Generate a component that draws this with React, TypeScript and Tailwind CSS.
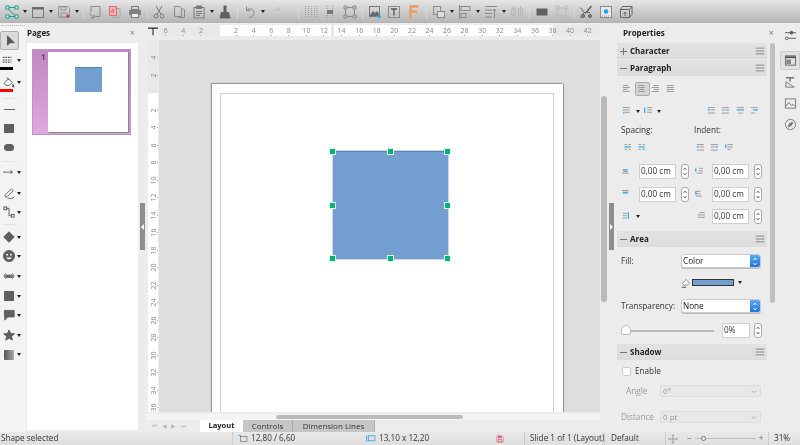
import type { ReactNode } from "react";

const Ic = ({ children, size = 14, color = "#7a7a7a" }: { children: ReactNode; size?: number; color?: string }) => (
  <svg viewBox="0 0 14 14" width={size} height={size} fill="none" stroke={color} strokeWidth="1">
    {children}
  </svg>
);

const Arrow = () => <div className="h-0 w-0 border-x-[2px] border-t-[3px] border-x-transparent border-t-[#222]" />;

const TbArrow = () => (
  <div className="flex w-[6.5px] justify-center">
    <Arrow />
  </div>
);
const TbSep = () => (
  <div className="flex w-[5px] justify-center">
    <div className="h-[14px] w-px bg-[#d6d6d6]" />
  </div>
);
const Tb = ({ children }: { children: ReactNode }) => <div className="flex w-[19.7px] justify-center">{children}</div>;

const Toolbar = () => (
  <div className="flex h-[23px] items-center bg-gradient-to-b from-[#e6e6e6] to-[#b4b4b4] pl-[2px]">
    <Tb>
      <Ic color="#1f9c8c">
        <path d="M3 2.5h8M2.5 3.5l8 7M3 11.5h8" />
        <rect x="1" y="1" width="3" height="3" fill="#cfe" />
        <rect x="10" y="1" width="3" height="3" fill="#cfe" />
        <rect x="1" y="10" width="3" height="3" fill="#cfe" />
        <rect x="10" y="10" width="3" height="3" fill="#cfe" />
      </Ic>
    </Tb>
    <TbArrow />
    <Tb>
      <Ic>
        <rect x="1.5" y="2.5" width="11" height="10" />
        <path d="M1.5 3.5h11" strokeWidth="2" stroke="#666" />
      </Ic>
    </Tb>
    <TbArrow />
    <Tb>
      <Ic color="#969696">
        <path d="M1.5 1.5h9l2 2v9h-11z" />
        <rect x="4" y="2" width="5" height="3" />
        <rect x="4" y="8" width="6" height="4" />
        <circle cx="11" cy="11" r="1.6" fill="#e0334d" stroke="none" />
      </Ic>
    </Tb>
    <TbArrow />
    <TbSep />
    <Tb>
      <Ic color="#8a8a8a">
        <path d="M3 7V1.5h9v10H7" />
        <path d="M1.5 8.5L6 13M6 9.5V13H2.5" />
      </Ic>
    </Tb>
    <Tb>
      <Ic color="#e4656b">
        <path d="M1.5 1.5h7v9h-7z" fill="#f2b5b8" />
        <path d="M9 3.5h3v9H5v-2" stroke="#a5a5a5" />
        <path d="M3 7l2-3 1 3z" />
      </Ic>
    </Tb>
    <Tb>
      <Ic>
        <rect x="3.5" y="1.5" width="7" height="3" />
        <rect x="1" y="5" width="12" height="5" fill="#808080" stroke="none" />
        <rect x="3.5" y="8.5" width="7" height="4" fill="#eee" />
      </Ic>
    </Tb>
    <TbSep />
    <Tb>
      <Ic>
        <path d="M4 1l5 8M10 1L5 9" />
        <circle cx="4" cy="11" r="2" />
        <circle cx="10" cy="11" r="2" />
      </Ic>
    </Tb>
    <Tb>
      <Ic color="#8a8a8a">
        <path d="M2.5 1.5h5l2 2v8h-7z" />
        <path d="M9.5 4h2l1 1v7.5h-6V11.5" />
      </Ic>
    </Tb>
    <Tb>
      <Ic>
        <rect x="2" y="2.5" width="10" height="10.5" />
        <rect x="4.5" y="1" width="5" height="2.5" fill="#777" />
        <path d="M4 6.5h6M4 8.5h6M4 10.5h4" />
      </Ic>
    </Tb>
    <TbArrow />
    <Tb>
      <Ic color="#606060">
        <rect x="6" y="1" width="2" height="6" fill="#606060" />
        <path d="M3 7.5h8v2H3zM3 9.5l-1 3.5h10l-1-3.5" fill="#606060" />
      </Ic>
    </Tb>
    <TbSep />
    <Tb>
      <Ic color="#8a8a8a">
        <path d="M3.5 1.5v4h4" />
        <path d="M3.5 5.5C6 2.5 11 3.5 11 8c0 3-2.5 4.5-5 4.5" />
      </Ic>
    </Tb>
    <TbArrow />
    <Tb>
      <Ic color="#c4c4c4">
        <path d="M10.5 1.5v4h-4" />
        <path d="M10.5 5.5C8 2.5 3 3.5 3 8c0 3 2.5 4.5 5 4.5" />
      </Ic>
    </Tb>
    <div className="w-[10px]" />
    <TbSep />
    <Tb>
      <Ic color="#a3a3a3">
        <path d="M1.5 1v12M4.5 1v12M7.5 1v12M10.5 1v12M13 1v12" strokeDasharray="1 1" />
      </Ic>
    </Tb>
    <Tb>
      <Ic color="#959595">
        <path d="M4 1v3M10 1v3M4 10v3M10 10v3" strokeDasharray="1 1" />
        <rect x="4" y="5" width="6" height="4" fill="#777" stroke="none" />
      </Ic>
    </Tb>
    <Tb>
      <Ic color="#8a8a8a">
        <rect x="2.5" y="2.5" width="9" height="9" />
        <path d="M1 1h3v3H1zM10 1h3v3h-3zM1 10h3v3H1zM10 10h3v3h-3z" fill="#c4c4c4" />
      </Ic>
    </Tb>
    <TbSep />
    <Tb>
      <Ic>
        <rect x="1.5" y="1.5" width="10" height="10" />
        <path d="M2 10l3-4 2 2 2-2 2 3v2H2z" fill="#666" stroke="none" />
        <path d="M11 9.5v4M9 11.5h4" stroke="#2ba9e8" strokeWidth="1.3" />
      </Ic>
    </Tb>
    <Tb>
      <Ic color="#8a8a8a">
        <rect x="1.5" y="1.5" width="11" height="11" />
        <path d="M4 4h6M7 4v6.5" stroke="#555" strokeWidth="1.3" />
      </Ic>
    </Tb>
    <Tb>
      <Ic color="#ef9a63">
        <path d="M3.5 13V1.5h8M3.5 6.5h6.5" strokeWidth="2.4" />
      </Ic>
    </Tb>
    <TbSep />
    <Tb>
      <Ic color="#8a8a8a">
        <rect x="1.5" y="1.5" width="7" height="8" />
        <rect x="5.5" y="6.5" width="7" height="6" fill="#ddd" />
      </Ic>
    </Tb>
    <TbArrow />
    <Tb>
      <Ic color="#8a8a8a">
        <path d="M1.5 0v14" />
        <rect x="3" y="1.5" width="9" height="4" />
        <rect x="3" y="8.5" width="5" height="4" />
      </Ic>
    </Tb>
    <TbArrow />
    <Tb>
      <Ic color="#8a8a8a">
        <path d="M1 1.5h12M1 5h7M1 8.5h7M1 12h7" />
        <path d="M10.5 13V4M9 6l1.5-2L12 6" />
      </Ic>
    </Tb>
    <TbArrow />
    <Tb>
      <Ic color="#b8b8b8">
        <path d="M3.5 1v12M10.5 1v12" />
        <rect x="1.5" y="4" width="4" height="6" />
        <rect x="8.5" y="4" width="4" height="6" />
      </Ic>
    </Tb>
    <TbSep />
    <Tb>
      <Ic>
        <rect x="1.5" y="3.5" width="11" height="7" fill="#606060" stroke="none" />
      </Ic>
    </Tb>
    <Tb>
      <Ic color="#bdbdbd">
        <rect x="3" y="3" width="8" height="8" />
        <path d="M1 1h3v3H1zM10 1h3v3h-3zM1 10h3v3H1zM10 10h3v3h-3z" />
      </Ic>
    </Tb>
    <TbSep />
    <Tb>
      <Ic color="#666">
        <path d="M1.5 2.5L5 7.5 1.5 12.5M5 7.5h6M11 3L6 9" />
        <circle cx="4" cy="11" r="1.6" fill="#888" />
        <circle cx="11" cy="11" r="1.6" fill="#888" />
        <path d="M12.5 1l-5 6" strokeWidth="1.6" />
      </Ic>
    </Tb>
    <Tb>
      <Ic color="#8a8a8a">
        <rect x="1.5" y="1.5" width="11" height="11" fill="#e8e8e8" />
        <circle cx="7" cy="6.5" r="2.2" fill="#1c9ee8" stroke="none" />
        <path d="M3 11h8" strokeDasharray="1 1" />
      </Ic>
    </Tb>
    <Tb>
      <Ic color="#666">
        <path d="M1.5 4.5h9v8h-9zM1.5 4.5l2-3h9.5v8l-2.5 3M10.5 4.5L13 1.5" />
        <path d="M6 11V7M4.5 8.5L6 7l1.5 1.5" />
      </Ic>
    </Tb>
  </div>
);

const Tool = ({ children, arrow }: { children: ReactNode; arrow?: boolean }) => (
  <div className="flex h-[19.6px] items-center">
    <div className="flex w-[16px] justify-center pl-[2px]">{children}</div>
    {arrow && (
      <div className="ml-[1px]">
        <Arrow />
      </div>
    )}
  </div>
);

const LeftSep = () => <div className="my-[1px] ml-[2px] h-px w-[15px] bg-[#e2e2e2]" />;

const LeftBar = () => (
  <div className="flex w-[26px] flex-col bg-[#f3f3f3]">
    <div className="mx-[1px] mt-[2px] h-px border-t border-dotted border-[#b5b5b5]" />
    <div className="mt-[5px] flex h-[19px] w-[19px] items-center justify-center rounded-[2px] border border-[#b5adb5] bg-[#dcdcdc]">
      <Ic size={12} color="#555">
        <path d="M4 1v11l3-3h5z" fill="#555" />
      </Ic>
    </div>
    <div className="mt-[4px] flex h-[21px] flex-col">
      <div className="flex items-center">
        <div className="flex w-[16px] justify-center">
          <Ic size={12} color="#555">
            <path d="M1 4h10M1 7h10M1 9.5h10" strokeWidth="1.4" strokeDasharray="2 1" />
          </Ic>
        </div>
        <div className="ml-[1px]">
          <Arrow />
        </div>
      </div>
      <div className="mt-[1px] h-[3px] w-[13px] bg-black" />
    </div>
    <div className="mt-[1px] flex h-[21px] flex-col">
      <div className="flex items-center">
        <div className="flex w-[16px] justify-center">
          <Ic size={13} color="#555">
            <path d="M2 8l5-5 4 4-3 3H4z" fill="#fff" />
            <path d="M5 1.5l3 3" />
            <path d="M12 9c1 2 1 3 0 3s-1-1 0-3z" fill="#555" />
          </Ic>
        </div>
        <div className="ml-[1px]">
          <Arrow />
        </div>
      </div>
      <div className="h-[3px] w-[13px] bg-[#ff0000]" />
    </div>
    <LeftSep />
    <Tool>
      <div className="h-px w-[11px] bg-[#666]" />
    </Tool>
    <div className="-mt-[1px]">
      <Tool>
        <div className="h-[9px] w-[10px] bg-[#5f5f5f]" />
      </Tool>
    </div>
    <Tool>
      <div className="h-[7px] w-[10px] rounded-full bg-[#5f5f5f]" />
    </Tool>
    <div className="mt-[2px]">
      <LeftSep />
    </div>
    <Tool arrow>
      <Ic size={12} color="#555">
        <path d="M0 6h11M8.5 4L11 6 8.5 8" />
      </Ic>
    </Tool>
    <div className="mt-px">
      <Tool arrow>
        <Ic size={13} color="#666">
          <path d="M2 9l1 2 2-1 6-6-2-2-6 6z" />
          <path d="M5 12c2 1 5 0 7-1" />
        </Ic>
      </Tool>
    </div>
    <Tool arrow>
      <Ic size={13} color="#555">
        <rect x="1" y="1" width="3" height="3" />
        <rect x="9" y="9" width="3" height="3" />
        <path d="M4 2.5h2.5v8H9" />
      </Ic>
    </Tool>
    <div className="mb-[2px]">
      <LeftSep />
    </div>
    <Tool arrow>
      <div className="h-[8px] w-[8px] rotate-45 bg-[#5f5f5f]" />
    </Tool>
    <Tool arrow>
      <Ic size={13} color="#5f5f5f">
        <circle cx="6.5" cy="6.5" r="6" fill="#5f5f5f" />
        <circle cx="4.5" cy="5" r="1" fill="#fff" stroke="none" />
        <circle cx="8.5" cy="5" r="1" fill="#fff" stroke="none" />
        <path d="M3.5 8c1 2.5 5 2.5 6 0z" fill="#fff" stroke="none" />
      </Ic>
    </Tool>
    <Tool arrow>
      <Ic size={13} color="#666">
        <path d="M3 5.5h7v2.5H3z" fill="#666" />
        <path d="M3 3.5L1 6.5l2 3M10 3.5l2 3-2 3" />
      </Ic>
    </Tool>
    <Tool arrow>
      <div className="h-[10px] w-[10px] bg-[#5f5f5f]" />
    </Tool>
    <Tool arrow>
      <Ic size={13} color="#5f5f5f">
        <path d="M1.5 1.5h10.5v7H5L2 12V8.5H1.5z" fill="#5f5f5f" />
      </Ic>
    </Tool>
    <Tool arrow>
      <Ic size={13} color="#5f5f5f">
        <path d="M6.5 1l1.7 3.8 4.1.4-3.1 2.7.9 4.1-3.6-2.1L2.9 12l.9-4.1L.7 5.2l4.1-.4z" fill="#5f5f5f" />
      </Ic>
    </Tool>
    <Tool arrow>
      <div className="h-[10px] w-[10px] rounded-[1px] bg-gradient-to-r from-[#555] to-[#aaa]" />
    </Tool>
  </div>
);

const PagesPanel = () => (
  <div className="flex w-[112px] flex-col bg-[#ececec]">
    <div className="flex h-[20px] items-center justify-between pl-[1px] pr-[3px]">
      <span className="text-[8px] font-bold text-[#222]">Pages</span>
      <span className="text-[9px] text-[#888]">×</span>
    </div>
    <div className="ml-[1px] h-[387px] bg-white pl-[5px] pt-[6px]">
      <div className="relative h-[86px] w-[99px] border border-[#c78fc8] bg-gradient-to-b from-[#c188c2] to-[#dda9de] pl-[15px] pt-[2px]">
        <div className="absolute left-[8px] top-[1px] text-[8px] font-bold text-[#555]">1</div>
        <div className="h-[80px] w-[80px] bg-white pl-[27px] pt-[15px] shadow-[1px_1px_1px_#888]">
          <div className="h-[25px] w-[27px] border-t border-[#5a85b8] bg-[#729fcf]" />
        </div>
      </div>
    </div>
  </div>
);

const Splitter = ({ dir }: { dir: "l" | "r" }) => (
  <div className="flex w-[5px] flex-col pt-[180px]">
    <div className="flex h-[47px] items-center justify-center bg-[#8e8e8e]">
      <div
        className={
          dir === "l"
            ? "h-0 w-0 border-y-[3px] border-r-[3px] border-y-transparent border-r-white"
            : "h-0 w-0 border-y-[3px] border-l-[3px] border-y-transparent border-l-white"
        }
      />
    </div>
  </div>
);

const hLabels = ["6", "4", "2", "", "2", "4", "6", "8", "10", "12", "14", "16", "18", "20", "22", "24", "26", "28", "30", "32", "34", "36", "38", "40", "42"];
const vLabels = ["4", "2", "", "2", "4", "6", "8", "10", "12", "14", "16", "18", "20", "22", "24", "26", "28", "30", "32", "34", "36"];

const HRuler = () => (
  <div className="relative mt-[2px] flex h-[11px] w-[441px]">
    <div className="w-[61px] bg-[#e8e8e8]" />
    <div className="w-[111px] bg-white" />
    <div className="w-[3px] bg-[#e8e8e8]" />
    <div className="w-[111px] bg-white" />
    <div className="w-px bg-[#e8e8e8]" />
    <div className="w-[107px] bg-white" />
    <div className="flex-1 bg-[#e8e8e8]" />
    <div className="absolute left-[-2px] top-0 flex h-[11px]">
      {hLabels.map((l, i) => (
        <div key={i} className="relative flex w-[17.58px] items-center justify-center text-[7px] leading-none text-[#8a8a8a]">
          {l}
          {l && <div className="absolute bottom-0 h-[1px] w-px bg-[#aaa]" />}
        </div>
      ))}
    </div>
  </div>
);

const VRuler = () => (
  <div className="relative ml-[2px] h-[372px] w-[10px] overflow-hidden bg-white">
    <div className="h-[53px] bg-[#e8e8e8]" />
    <div className="absolute left-0 top-[9px] flex w-[10px] flex-col">
      {vLabels.map((l, i) => (
        <div key={i} className="relative flex h-[17.5px] items-center justify-center text-[7px] leading-none text-[#8a8a8a]">
          <span className="-rotate-90">{l}</span>
          {l && <div className="absolute right-0 h-px w-[1px] bg-[#aaa]" />}
        </div>
      ))}
    </div>
  </div>
);

const Handle = ({ className }: { className: string }) => (
  <div className={"absolute h-[7px] w-[7px] border border-[#dff3ec] bg-[#00b37c] " + className} />
);

const Canvas = () => (
  <div className="h-[372px] w-[441px] overflow-hidden bg-[#dedede] pl-[53px] pt-[44px]">
    <div className="h-[400px] w-[351px] bg-white pl-[8px] pt-[9px] shadow-[-1px_-1px_1px_#999,1px_0_1px_#999]">
      <div className="relative h-[380px] w-[334px] border border-[#d0d0d0]">
        <div className="absolute left-[112px] top-[57px] h-[108px] w-[115px] border-t border-[#5a85b8] bg-[#729fcf] shadow-[0_0_0_1px_#c8d8ea]" />
        <Handle className="left-[108px] top-[54px]" />
        <Handle className="left-[166px] top-[54px]" />
        <Handle className="left-[223px] top-[54px]" />
        <Handle className="left-[108px] top-[108px]" />
        <Handle className="left-[223px] top-[108px]" />
        <Handle className="left-[108px] top-[161px]" />
        <Handle className="left-[166px] top-[161px]" />
        <Handle className="left-[223px] top-[161px]" />
      </div>
    </div>
  </div>
);

const Workspace = () => (
  <div className="flex w-[463px] flex-col">
    <div className="flex h-[17px]">
      <div className="flex w-[13px] items-center justify-center pb-[1px]">
        <Ic size={10} color="#222">
          <path d="M0 3h14M7 3v10" strokeWidth="1.5" />
        </Ic>
      </div>
      <HRuler />
    </div>
    <div className="flex h-[372px]">
      <div className="w-[13px]">
        <VRuler />
      </div>
      <Canvas />
      <div className="w-[9px] bg-[#ececec] pl-[1px] pt-[56px]">
        <div className="h-[206px] w-[6px] rounded-full bg-[#b9b9b9]" />
      </div>
    </div>
    <div className="mt-[2px] h-[6px] w-[454px] bg-[#f4f4f4] pl-[130px] pt-px">
      <div className="h-[4px] w-[187px] rounded-full bg-[#bbb]" />
    </div>
    <div className="flex h-[12px] w-[463px] items-stretch">
      <div className="flex w-[54px] items-center gap-[4.5px] pl-[6px] text-[6px] text-[#bbb]">
        <span>⏮</span>
        <span>◀</span>
        <span>▶</span>
        <span>⏭</span>
      </div>
      <div className="flex w-[43px] items-center justify-center bg-white text-[7.6px] font-bold text-[#222]">Layout</div>
      <div className="flex w-[50px] items-center justify-center border-r border-[#aaa] bg-[#c6c6c6] text-[8px] text-[#333]">Controls</div>
      <div className="flex w-[82px] items-center justify-center border-r border-[#aaa] bg-[#c6c6c6] text-[8px] text-[#333]">Dimension Lines</div>
    </div>
  </div>
);

const Spinner = () => (
  <div className="flex h-[15px] w-[8px] flex-col items-center justify-center rounded-[3px] border border-[#aaa] bg-white">
    <svg viewBox="0 0 6 11" width="6" height="11" fill="none" stroke="#555" strokeWidth="0.8">
      <path d="M1.5 4L3 2l1.5 2M1.5 7L3 9l1.5-2" />
    </svg>
  </div>
);

const Input = ({ children = "0,00 cm", w = "w-[37px]" }: { children?: string; w?: string }) => (
  <div className={"flex h-[15px] items-center border border-[#cfcfcf] bg-white pl-[1px] text-[8.2px] text-[#333] " + w}>{children}</div>
);

const Section = ({ name, open = true }: { name: string; open?: boolean }) => (
  <div className="flex h-[16px] items-center justify-between bg-gradient-to-b from-[#e2e2e2] to-[#dcdcdc] pl-[3px] pr-[2px]">
    <div className="flex items-center">
      <div className="w-[10px]">
        <svg viewBox="0 0 7 7" width="7" height="7" stroke="#777" strokeWidth="1">
          <path d={open ? "M0 3.5h7" : "M0 3.5h7M3.5 0v7"} />
        </svg>
      </div>
      <span className="text-[8px] font-bold text-[#222]">{name}</span>
    </div>
    <Ic size={10} color="#8a8a8a">
      <path d="M1 3h12M1 7h12M1 11h12" strokeWidth="1.4" />
    </Ic>
  </div>
);

const Para = ({ d, blue }: { d: string; blue?: string }) => (
  <Ic size={11} color="#979797">
    <path d={d} strokeWidth="1.2" />
    {blue && <path d={blue} stroke="#1e9ce8" strokeWidth="1.4" />}
  </Ic>
);

const Cell = ({ children, className = "w-[14.5px]" }: { children: ReactNode; className?: string }) => (
  <div className={"flex justify-center " + className}>{children}</div>
);

const BlueSelect = ({ children }: { children: string }) => (
  <div className="flex h-[14px] w-[80px] items-stretch overflow-hidden rounded-[3px] border border-[#ccc] bg-white shadow-[0_1px_0_#bbb]">
    <div className="flex flex-1 items-center pl-[1px] text-[8.2px] text-[#222]">{children}</div>
    <div className="flex w-[10px] items-center justify-center bg-gradient-to-b from-[#5aa8f6] to-[#1f72e6]">
      <svg viewBox="0 0 6 11" width="6" height="11" fill="none" stroke="#fff" strokeWidth="0.9">
        <path d="M1.5 4L3 2l1.5 2M1.5 7L3 9l1.5-2" />
      </svg>
    </div>
  </div>
);

const DisabledSelect = ({ children }: { children: string }) => (
  <div className="flex h-[12px] w-[101px] items-center justify-between rounded-[2px] border border-[#ddd] bg-[#e8e8e8] pl-[2px] pr-[3px] text-[8px] text-[#9a9a9a]">
    <span>{children}</span>
    <svg viewBox="0 0 8 6" width="6" height="5" fill="none" stroke="#999">
      <path d="M1 1.5l3 3 3-3" />
    </svg>
  </div>
);

const SpacingRow = ({ a, b }: { a: string; b: string }) => (
  <div className="flex h-[15px] items-center">
    <Cell className="w-[19px] justify-start pl-[1px]">
      <Para d={a} blue="M2 5h7" />
    </Cell>
    <Input />
    <div className="ml-[5px]">
      <Spinner />
    </div>
    <Cell className="w-[23px]">
      <Para d={b} blue="M1 3v4" />
    </Cell>
    <Input />
    <div className="ml-[5px]">
      <Spinner />
    </div>
  </div>
);

const Properties = () => (
  <div className="flex w-[161px] flex-col">
    <div className="flex h-[20px] items-center justify-between pl-[8px] pr-[2px]">
      <span className="text-[8px] font-bold text-[#222]">Properties</span>
      <span className="text-[9px] text-[#777]">×</span>
    </div>
    <div className="flex">
      <div className="ml-[2px] h-[389px] w-[150px] overflow-hidden text-[8.2px] text-[#333]">
        <Section name="Character" open={false} />
        <div className="mt-px">
          <Section name="Paragraph" />
        </div>
        <div className="flex h-[155px] flex-col pl-[3px] pt-[6px]">
          <div className="flex h-[14px] items-center">
            <Cell>
              <Para d="M1 2h7M1 4.5h9M1 7h6M1 9.5h9" />
            </Cell>
            <div className="flex h-[14px] w-[15px] items-center justify-center rounded-[2px] border border-[#aaa] bg-[#d6d6d6]">
              <Para d="M2 2h7M1 4.5h9M2 7h7M1 9.5h9" />
            </div>
            <Cell>
              <Para d="M3 2h7M1 4.5h9M4 7h6M1 9.5h9" />
            </Cell>
            <Cell>
              <Para d="M1 2h9M1 4.5h9M1 7h9M1 9.5h9" />
            </Cell>
          </div>
          <div className="mt-[8px] flex h-[14px] items-center">
            <Cell className="w-[14px]">
              <Para d="M1 2h9M3 5h7M3 8h7" blue="M1 5h2M1 9h2" />
            </Cell>
            <Cell className="w-[8px] items-center">
              <Arrow />
            </Cell>
            <Cell className="w-[14px]">
              <Para d="M4 2h6M4 5h6M4 8h6" blue="M1 2v7" />
            </Cell>
            <Cell className="w-[6px] items-center">
              <Arrow />
            </Cell>
            <div className="ml-[43px] flex">
              <Cell>
                <Para d="M1 2h9M5 5h5M1 9h9" blue="M1 5h3" />
              </Cell>
              <Cell>
                <Para d="M1 2h9M1 5h5M1 9h9" blue="M7 5h3" />
              </Cell>
              <Cell>
                <Para d="M1 2h9M3 9h6" blue="M1 5h9" />
              </Cell>
              <Cell>
                <Para d="M1 2h9M1 9h5" blue="M4 5h6" />
              </Cell>
            </div>
          </div>
          <div className="mt-[6px] flex h-[12px] items-center pl-px">
            <span className="w-[73px]">Spacing:</span>
            <span>Indent:</span>
          </div>
          <div className="mt-[5px] flex h-[14px] items-center pl-px">
            <Cell className="w-[14px]">
              <Para d="M2 2h3M7 2h3M2 8h3M7 8h3" blue="M2 5h8" />
            </Cell>
            <Cell className="w-[14px]">
              <Para d="M2 2h3M7 2h3M2 8h3" blue="M2 5h8M7 8h3" />
            </Cell>
            <div className="ml-[45px] flex">
              <Cell>
                <Para d="M1 2h9M5 5h5M1 9h9" blue="M1 5h3" />
              </Cell>
              <Cell>
                <Para d="M1 2h9M1 5h5M1 9h9" blue="M7 5h3" />
              </Cell>
              <Cell>
                <Para d="M3 2h7M3 5h7M3 8h4" blue="M1 2v4" />
              </Cell>
            </div>
          </div>
          <div className="mt-[9px]">
            <SpacingRow a="M1 9h9M3 7h5" b="M5 3h5M5 6h5M2 9h8" />
          </div>
          <div className="mt-[8px]">
            <SpacingRow a="M1 2h9M3 4h5" b="M1 3h6M1 6h6M1 9h8" />
          </div>
          <div className="mt-[7px] flex h-[15px] items-center">
            <Cell className="w-[14px]">
              <Para d="M1 3h5M1 6h5M1 9h5" blue="M8 2v8" />
            </Cell>
            <Cell className="w-[8px] items-center">
              <Arrow />
            </Cell>
            <div className="ml-[52px] mr-[1px] flex w-[17px] justify-center">
              <Para d="M3 2h7M1 5h9M1 8h9" />
            </div>
            <Input />
            <div className="ml-[5px]">
              <Spinner />
            </div>
          </div>
        </div>
        <Section name="Area" />
        <div className="flex h-[97px] flex-col pl-[4px]">
          <div className="mt-[7px] flex h-[14px] items-center">
            <span className="w-[60px]">Fill:</span>
            <BlueSelect>Color</BlueSelect>
          </div>
          <div className="mt-[11px] flex h-[7px] items-center pl-[60px]">
            <Ic size={10} color="#666">
              <path d="M2 8l5-6 5 5-3 3H4z" fill="#fff" />
              <path d="M1 13h6" strokeWidth="1.6" />
            </Ic>
            <div className="ml-px h-[7px] w-[42px] border border-[#333] bg-[#729fcf]" />
            <div className="ml-[4px]">
              <Arrow />
            </div>
          </div>
          <div className="mt-[13px] flex h-[14px] items-center">
            <span className="w-[60px]">Transparency:</span>
            <BlueSelect>None</BlueSelect>
          </div>
          <div className="mt-[10px] flex h-[15px] items-center">
            <div className="relative h-[2px] w-[93px] bg-[#bbb]">
              <div className="absolute left-0 top-[-5px] h-[10px] w-[10px] rounded-t-[5px] rounded-b-[2px] border border-[#bbb] bg-white" />
            </div>
            <div className="ml-[8px]">
              <Input w="w-[28px]">0%</Input>
            </div>
            <div className="ml-[4px]">
              <Spinner />
            </div>
          </div>
        </div>
        <Section name="Shadow" />
        <div className="flex flex-col pl-[4px]">
          <div className="mt-[7px] flex h-[9px] items-center pl-px">
            <div className="h-[9px] w-[9px] rounded-[2px] border border-[#ccc] bg-white" />
            <span className="ml-[4px]">Enable</span>
          </div>
          <div className="mt-[9px] flex h-[12px] items-center text-[#9a9a9a]">
            <span className="w-[39px] pl-[5px]">Angle</span>
            <DisabledSelect>0°</DisabledSelect>
          </div>
          <div className="mt-[14px] flex h-[12px] items-center text-[#9a9a9a]">
            <span className="w-[39px]">Distance</span>
            <DisabledSelect>0 pt</DisabledSelect>
          </div>
        </div>
      </div>
      <div className="ml-[3px] h-[260px] w-[5px] rounded-full bg-[#c0c0c0]" />
    </div>
  </div>
);

const Tabs = () => (
  <div className="flex w-[24px] flex-col items-center pl-[4px] pt-[4px]">
    <div className="flex h-[16px] items-center">
      <Ic size={13} color="#555">
        <path d="M1 4h12M1 10h12" />
        <circle cx="8" cy="4" r="1.5" fill="#555" />
        <circle cx="3" cy="10" r="1.5" fill="#fff" />
      </Ic>
    </div>
    <div className="mt-[8px] flex h-[19px] w-[20px] items-center justify-center rounded-[2px] border border-[#ccc] bg-[#e2e2e2]">
      <Ic size={13} color="#666">
        <rect x="1.5" y="2" width="11" height="10" />
        <path d="M1.5 3.5h11" strokeWidth="2" stroke="#555" />
        <rect x="2.5" y="6" width="5" height="5" fill="#888" stroke="none" />
      </Ic>
    </div>
    <div className="mt-[4px] flex h-[16px] items-center">
      <Ic size={13} color="#777">
        <path d="M2 2h9M6.5 2v4" strokeWidth="1.6" />
        <path d="M2 12V6l9 6z" />
      </Ic>
    </div>
    <div className="mt-[5px] flex h-[16px] items-center">
      <Ic size={13} color="#777">
        <rect x="1.5" y="2" width="11" height="10" />
        <path d="M2 10l3-4 3 3 2-1 2 2" />
      </Ic>
    </div>
    <div className="mt-[5px] flex h-[16px] items-center">
      <Ic size={13} color="#777">
        <circle cx="7" cy="7" r="5.5" />
        <path d="M9.5 4.5L8 8 4.5 9.5 6 6z" fill="#777" />
      </Ic>
    </div>
  </div>
);

const StatusBar = () => (
  <div className="flex h-[13px] items-center whitespace-nowrap bg-gradient-to-b from-[#e8e8e8] to-[#dfdfdf] text-[8.2px] leading-none text-[#333]">
    <div className="w-[232px] pl-px">Shape selected</div>
    <div className="flex h-full w-[134px] items-center border-l border-[#ccc] pl-[5px]">
      <Ic size={10} color="#1e9ce8">
        <path d="M1 2h3" strokeWidth="1.3" />
        <rect x="3.5" y="3.5" width="9" height="7" stroke="#777" />
      </Ic>
      <span className="ml-[3px]">12,80 / 6,60</span>
    </div>
    <div className="flex h-full w-[126px] items-center">
      <Ic size={10} color="#1e9ce8">
        <path d="M1 2v9" strokeWidth="1.3" />
        <rect x="3.5" y="2.5" width="9" height="7" />
      </Ic>
      <span className="ml-[3px]">13,10 x 12,20</span>
    </div>
    <div className="flex h-full w-[32px] items-center pl-[4px]">
      <Ic size={8} color="#e0556b">
        <path d="M1.5 1.5h9l2 2v9h-11z" />
        <rect x="4" y="2" width="5" height="3" fill="#e0556b" />
        <rect x="4" y="8" width="6" height="4" />
      </Ic>
    </div>
    <div className="flex h-full w-[80px] items-center border-l border-[#ccc] pl-[5px]">Slide 1 of 1 (Layout)</div>
    <div className="flex h-full w-[61px] items-center border-l border-[#ccc] pl-[6px]">Default</div>
    <div className="flex h-full w-[103px] items-center border-l border-[#ccc] pl-[2px]">
      <Ic size={10} color="#888">
        <path d="M7 1v12M1 7h12M5.5 2.5L7 1l1.5 1.5M5.5 11.5L7 13l1.5-1.5M2.5 5.5L1 7l1.5 1.5M11.5 5.5L13 7l-1.5 1.5" />
      </Ic>
      <span className="ml-[9px] text-[#666]">−</span>
      <div className="relative ml-[3px] h-px w-[61px] bg-[#bbb]">
        <div className="absolute left-[6px] top-[-2px] h-[5px] w-[5px] rounded-full border border-[#777] bg-[#eee]" />
      </div>
      <span className="ml-[3px] text-[#666]">+</span>
    </div>
    <div className="flex h-full flex-1 items-center border-l border-[#ccc] pl-[5px]">31%</div>
  </div>
);

export default function App() {
  return (
    <div className="flex h-[445px] w-[800px] flex-col overflow-hidden bg-[#ececec] font-['Open_Sans',sans-serif] blur-[0.3px]">
      <Toolbar />
      <div className="flex h-[409px]">
        <LeftBar />
        <PagesPanel />
        <div className="ml-[2px] w-[6px]">
          <Splitter dir="l" />
        </div>
        <Workspace />
        <div className="w-[6px]">
          <Splitter dir="r" />
        </div>
        <Properties />
        <Tabs />
      </div>
      <StatusBar />
    </div>
  );
}
